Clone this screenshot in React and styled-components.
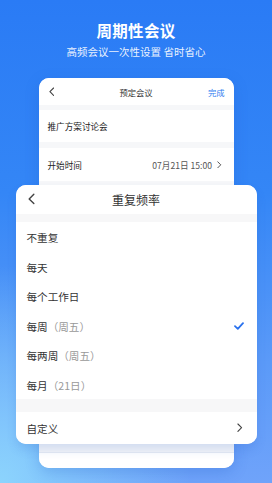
import React from "react";
import styled, { createGlobalStyle } from "styled-components";

const Global = createGlobalStyle`
  html, body { margin: 0; padding: 0; }
  body { font-family: "Noto Sans CJK SC", "Noto Sans", sans-serif; }
  * { box-sizing: border-box; }
`;

const Page = styled.div`
  width: 272px;
  height: 483px;
  overflow: hidden;
  display: flex;
  flex-direction: column;
  align-items: center;
  background:
    radial-gradient(ellipse 70% 45% at 0% 100%, rgba(140, 212, 253, 1) 0%, rgba(140, 212, 253, 0) 100%),
    linear-gradient(180deg, #2a7bf5 0%, #3486f6 40%, #5b9af8 75%, #6fa3fa 100%);
`;

const Title = styled.div`
  margin-top: 20px;
  font-size: 15.5px;
  font-weight: 700;
  color: #fff;
  line-height: 20px;
  letter-spacing: 0.3px;
`;

const Subtitle = styled.div`
  margin-top: 5px;
  font-size: 10.5px;
  color: rgba(255, 255, 255, 0.92);
  line-height: 14px;
`;

const Stage = styled.div`
  position: relative;
  margin-top: 19px;
  width: 195px;
  height: 390px;
`;

const BackCard = styled.div`
  width: 195px;
  height: 390px;
  border-radius: 10px;
  background: #f6f7f9;
  overflow: hidden;
  display: flex;
  flex-direction: column;
  box-shadow: 0 4px 14px rgba(30, 90, 200, 0.25);
`;

const BackHeader = styled.div`
  height: 27px;
  background: #fff;
  display: grid;
  grid-template-columns: 40px 1fr 40px;
  align-items: center;
  font-size: 8.3px;
  color: #333;
`;

const BackRow = styled.div`
  height: ${(p) => p.$h}px;
  margin-top: ${(p) => p.$gap}px;
  background: #fff;
  display: flex;
  align-items: center;
  justify-content: space-between;
  padding: 0 12px 0 9px;
  font-size: 8.6px;
  color: #222;
`;

const BackValue = styled.span`
  display: flex;
  align-items: center;
  gap: 5px;
  color: #555;
`;

const Done = styled.span`
  justify-self: end;
  padding-right: 9px;
  color: #2f7bf0;
`;

const Center = styled.span`
  text-align: center;
`;

const BackLead = styled.span`
  padding-left: 10px;
  display: flex;
`;

const BackBottom = styled.div`
  margin-top: auto;
  height: 16px;
  background: #fff;
  border-top: 1px solid #e6eaf3;
`;

const Sheet = styled.div`
  position: absolute;
  left: -23px;
  top: 107px;
  width: 241px;
  height: 259px;
  border-radius: 10px;
  background: #f7f7f8;
  overflow: hidden;
  display: flex;
  flex-direction: column;
  box-shadow: 0 6px 10px rgba(50, 100, 200, 0.18);
`;

const SheetHeader = styled.div`
  height: 29px;
  background: #fff;
  position: relative;
  display: flex;
  align-items: center;
  justify-content: center;
  font-size: 12px;
  color: #333;
`;

const HeaderBack = styled.span`
  position: absolute;
  left: 12px;
  top: 8px;
  display: flex;
`;

const List = styled.div`
  margin-top: 8px;
  background: #fff;
  display: flex;
  flex-direction: column;
`;

const Item = styled.div`
  height: 29.5px;
  display: flex;
  align-items: center;
  justify-content: space-between;
  padding: 2px 13px 0 11px;
  font-size: 10.6px;
  color: #333;
`;

const Note = styled.span`
  color: #999;
`;

const CustomRow = styled(Item)`
  margin-top: 13px;
  height: 32px;
  background: #fff;
  padding-top: 0;
  padding-right: 14px;
`;

const Chevron = ({ size = 6, color = "#555", left }) => (
  <svg width={size} height={size * 1.7} viewBox="0 0 6 10" fill="none">
    <path
      d={left ? "M5 1 L1 5 L5 9" : "M1 1 L5 5 L1 9"}
      stroke={color}
      strokeWidth="1.2"
      strokeLinecap="round"
      strokeLinejoin="round"
    />
  </svg>
);

const Check = () => (
  <svg width="10" height="8" viewBox="0 0 10 8" fill="none">
    <path d="M1 4.2 L3.8 6.8 L9 1.2" stroke="#2a72ee" strokeWidth="1.8" strokeLinecap="round" strokeLinejoin="round" />
  </svg>
);

const items = [
  ["不重复"],
  ["每天"],
  ["每个工作日"],
  ["每周", "（周五）", true],
  ["每两周", "（周五）"],
  ["每月", "（21日）"],
];

export default function App() {
  return (
    <Page>
      <Global />
      <Title>周期性会议</Title>
      <Subtitle>高频会议一次性设置 省时省心</Subtitle>
      <Stage>
        <BackCard>
          <BackHeader>
            <BackLead>
              <Chevron size={5.5} color="#444" left />
            </BackLead>
            <Center>预定会议</Center>
            <Done>完成</Done>
          </BackHeader>
          <BackRow $h={32} $gap={5}>推广方案讨论会</BackRow>
          <BackRow $h={33} $gap={6}>
            <span>开始时间</span>
            <BackValue>
              07月21日 15:00
              <Chevron size={4.5} color="#444" />
            </BackValue>
          </BackRow>
          <BackBottom />
        </BackCard>
        <Sheet>
          <SheetHeader>
            <HeaderBack>
              <Chevron size={7} color="#444" left />
            </HeaderBack>
            重复频率
          </SheetHeader>
          <List>
            {items.map(([a, b, sel]) => (
              <Item key={a}>
                <span>
                  {a}
                  {b && <Note>{b}</Note>}
                </span>
                {sel && <Check />}
              </Item>
            ))}
          </List>
          <CustomRow>
            <span>自定义</span>
            <Chevron size={5.5} color="#444" />
          </CustomRow>
        </Sheet>
      </Stage>
    </Page>
  );
}
